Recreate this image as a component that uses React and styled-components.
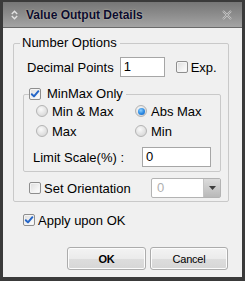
import React from 'react';
import styled, { createGlobalStyle } from 'styled-components';

const Global = createGlobalStyle`
  html, body { margin: 0; padding: 0; background: #f0f0f0; }
  body { font-family: "Liberation Sans", Arial, sans-serif; font-size: 13px; color: #000; }
  * { box-sizing: border-box; }
`;

const Window = styled.div`
  width: 245px;
  height: 281px;
  border: 3px solid #3a3a3a;
  border-top-width: 2px;
  border-bottom-width: 4px;
  background: #f0f0f0;
  display: flex;
  flex-direction: column;
`;

const TitleBar = styled.div`
  height: 26px;
  flex: none;
  display: flex;
  align-items: center;
  padding: 0 10px 0 8px;
  background: linear-gradient(to bottom, #767676 0%, #8a8a8a 45%, #a4a4a4 100%);
  border-bottom: 1px solid #6a6a6a;
`;

const Title = styled.div`
  flex: 1;
  margin-left: 8px;
  font-weight: bold;
  font-size: 12px;
  color: #0c0c30;
  text-shadow: 0 0 2px rgba(255, 245, 200, 0.55);
`;

const Body = styled.div`
  flex: 1;
  display: flex;
  flex-direction: column;
  padding: 0 13px 0 10px;
`;

const Group = styled.fieldset`
  margin: ${p => p.$top}px 0 0 0;
  padding: 0 ${p => p.$pr}px ${p => p.$pb}px ${p => p.$pl}px;
  border: 1px solid #c9c9c9;
  border-radius: 2px;
  min-width: 0;
`;

const Legend = styled.legend`
  padding: 0 3px 0 ${p => p.$pl || 0}px;
  margin-left: ${p => p.$ml}px;
  line-height: 14px;
  height: 14px;
  display: flex;
  align-items: center;
  gap: 3px;
`;

const Row = styled.div`
  display: flex;
  align-items: center;
  height: ${p => p.$h || 20}px;
  margin-top: ${p => p.$mt || 0}px;
  padding-left: ${p => p.$pl || 0}px;
`;

const Label = styled.span`
  width: ${p => (p.$w ? `${p.$w}px` : 'auto')};
  margin-right: ${p => p.$mr || 0}px;
  white-space: nowrap;
  flex: none;
`;

const TextBox = styled.div`
  width: ${p => p.$w}px;
  height: 20px;
  border: 1px solid #a6a6a6;
  background: #fff;
  padding-left: 3px;
  line-height: 18px;
  flex: none;
  margin-right: ${p => p.$mr || 0}px;
`;

const BoxMark = styled.span`
  width: 12px;
  height: 12px;
  border: 1px solid #8e8e8e;
  border-radius: 2px;
  background: linear-gradient(135deg, #dcdcdc 0%, #f2f2f2 60%, #ffffff 100%);
  box-shadow: inset 0 0 0 1px #f4f4f4;
  display: inline-flex;
  align-items: center;
  justify-content: center;
  flex: none;
  margin-right: 3px;
`;

const RadioMark = styled.span`
  width: 12px;
  height: 12px;
  border-radius: 50%;
  border: 1px solid #b4b4b4;
  background: radial-gradient(circle at 40% 35%, #fafafa 0%, #e2e2e2 55%, #cfcfcf 100%);
  display: inline-flex;
  align-items: center;
  justify-content: center;
  flex: none;
  margin-right: 4px;
`;

const RadioDot = styled.span`
  width: 7px;
  height: 7px;
  border-radius: 50%;
  background: radial-gradient(circle at 40% 35%, #8fd0ff 0%, #2f8de4 50%, #145fbf 100%);
`;

const RadioGrid = styled.div`
  display: grid;
  grid-template-columns: 99px 1fr;
  grid-auto-rows: 16px;
  row-gap: 4px;
  margin-top: 2px;
  padding-left: 12px;
`;

const RadioItem = styled.div`
  display: flex;
  align-items: center;
  white-space: nowrap;
`;

const Combo = styled.div`
  width: 70px;
  height: 20px;
  border: 1px solid #b3b3b3;
  border-radius: 2px;
  background: #fff;
  display: flex;
  flex: none;
`;

const ComboText = styled.div`
  flex: 1;
  color: #b0b0b0;
  padding-left: 5px;
  line-height: 18px;
`;

const ComboButton = styled.div`
  width: 17px;
  background: linear-gradient(to bottom, #dcdcdc, #b9b9b9);
  border-left: 1px solid #c4c4c4;
  display: flex;
  align-items: center;
  justify-content: center;
`;

const ButtonRow = styled.div`
  display: flex;
  justify-content: flex-end;
  gap: 4px;
  margin-top: 19px;
  padding-right: 1px;
`;

const Button = styled.div`
  width: ${p => p.$w}px;
  height: 23px;
  border: 1px solid #acacac;
  border-radius: 3px;
  background: linear-gradient(to bottom, #f3f3f3 0%, #ebebeb 50%, #dddddd 51%, #d6d6d6 100%);
  box-shadow: inset 0 0 0 1px #fcfcfc;
  display: flex;
  align-items: center;
  justify-content: center;
  font-size: 11px;
  letter-spacing: -0.2px;
  font-weight: ${p => (p.$bold ? 'bold' : 'normal')};
`;

const Check = ({ checked }) => (
  <BoxMark>
    {checked && (
      <svg width="10" height="10" viewBox="0 0 10 10">
        <path d="M1.8 5.2 L4 7.4 L8.4 2.2" fill="none" stroke="#2566c8" strokeWidth="2" strokeLinecap="round" strokeLinejoin="round" />
      </svg>
    )}
  </BoxMark>
);

const Radio = ({ on, children }) => (
  <RadioItem>
    <RadioMark>{on && <RadioDot />}</RadioMark>
    {children}
  </RadioItem>
);

export default function App() {
  return (
    <>
      <Global />
      <Window>
        <TitleBar>
          <svg width="7" height="10" viewBox="0 0 7 10">
            <path d="M0.8 4 L3.5 1.2 L6.2 4" fill="none" stroke="#e2e2e2" strokeWidth="1.4" />
            <path d="M0.8 6 L3.5 8.8 L6.2 6" fill="none" stroke="#e2e2e2" strokeWidth="1.4" />
          </svg>
          <Title>Value Output Details</Title>
          <svg width="10" height="10" viewBox="0 0 10 10">
            <path d="M1 1 L9 9 M9 1 L1 9" stroke="#c6c6c6" strokeWidth="2" />
            <path d="M1 1 L9 9 M9 1 L1 9" stroke="#7a7a7a" strokeWidth="0.6" />
          </svg>
        </TitleBar>
        <Body>
          <Group $top={8} $pl={9} $pr={7} $pb={3}>
            <Legend $ml={-3} $pl={2}>Number Options</Legend>
            <Row $mt={7} $pl={4}>
              <Label $mr={6}>Decimal Points</Label>
              <TextBox $w={45} $mr={11}>1</TextBox>
              <Check />
              <Label>Exp.</Label>
            </Row>
            <Group $top={10} $pl={0} $pr={0} $pb={4}>
              <Legend $ml={5}>
                <Check checked />
                MinMax Only
              </Legend>
              <RadioGrid>
                <Radio>Min &amp; Max</Radio>
                <Radio on>Abs Max</Radio>
                <Radio>Max</Radio>
                <Radio>Min</Radio>
              </RadioGrid>
              <Row $mt={8} $pl={9}>
                <Label $w={109}>Limit Scale(%) :</Label>
                <TextBox $w={69}>0</TextBox>
              </Row>
            </Group>
            <Row $mt={6} $pl={6}>
              <Check />
              <Label $w={107}>Set Orientation</Label>
              <Combo>
                <ComboText>0</ComboText>
                <ComboButton>
                  <svg width="7" height="4" viewBox="0 0 7 4">
                    <path d="M0 0 L7 0 L3.5 4 Z" fill="#3d3d3d" />
                  </svg>
                </ComboButton>
              </Combo>
            </Row>
          </Group>
          <Row $mt={10} $h={16} $pl={10}>
            <Check checked />
            <Label>Apply upon OK</Label>
          </Row>
          <ButtonRow>
            <Button $w={79} $bold>OK</Button>
            <Button $w={78}>Cancel</Button>
          </ButtonRow>
        </Body>
      </Window>
    </>
  );
}
